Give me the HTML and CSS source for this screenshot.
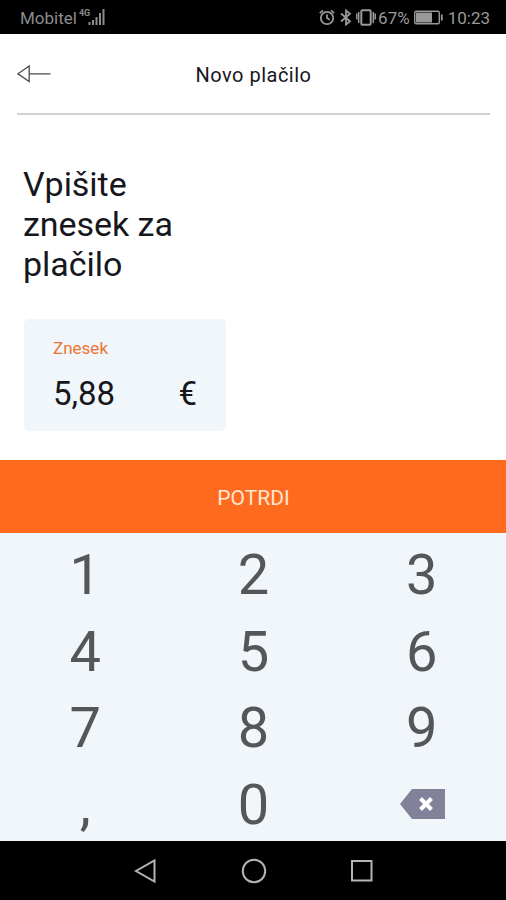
FILE: index.html
```html
<!DOCTYPE html>
<html lang="sl">
<head>
    <meta charset="UTF-8">
    <meta name="viewport" content="width=device-width, initial-scale=1.0">
    <title>Novo plačilo</title>
    <link rel="stylesheet" href="styles.css">
</head>
<body>
    <div class="status-bar">
        <div class="carrier">
            <span>Mobitel</span>
            <span class="network">4G</span>
            <svg class="signal" width="17" height="17" viewBox="0 0 17 17">
                <path d="M1.5 13v3M5 11V16M8.5 8v8M12 4v12M15.5 0v16" stroke="currentColor" stroke-width="2"/>
            </svg>
        </div>
        <div class="status-icons">
            <svg class="alarm" width="16" height="17" viewBox="0 0 16 17" fill="none" stroke="currentColor" stroke-width="1.8">
                <circle cx="8" cy="9" r="6.2"/>
                <path d="M8 5.5V9l2.8 1.8M.8 4.2L4 1.3M15.2 4.2L12 1.3"/>
            </svg>
            <svg class="bluetooth" width="12" height="17" viewBox="0 0 12 17" fill="none" stroke="currentColor" stroke-width="1.8">
                <path d="M1 4.5l9 7.8-4 3.2v-14l4 3.2-9 7.8"/>
            </svg>
            <svg class="vibrate" width="20" height="17" viewBox="0 0 20 17" fill="none" stroke="currentColor" stroke-width="2">
                <rect x="5.3" y="1.3" width="9.4" height="14.4" rx="1"/>
                <path d="M2.7 3v11M.8 4.5v6M17.3 3v11M19.2 4.5v6" stroke-width="1.5"/>
            </svg>
            <span class="percent">67%</span>
            <svg class="battery" width="29" height="15" viewBox="0 0 29 15">
                <rect x=".7" y="1.2" width="24.6" height="12.6" rx="1.5" fill="none" stroke="currentColor" stroke-width="1.4"/>
                <path d="M2 2.500h16v10H2z" fill="currentColor"/>
                <path d="M27.8 4.5v6" stroke="currentColor" stroke-width="1.8"/>
            </svg>
            <span class="time">10:23</span>
        </div>
    </div>

    <header class="header">
        <svg class="back" width="34" height="20" viewBox="0 0 34 20" fill="none" stroke="#4a4a52" stroke-width="1.3">
            <path d="M12.2 2v15.5L1 9.8zM12.2 9.8H33.5"/>
        </svg>
        <h1 class="title">Novo plačilo</h1>
    </header>

    <main class="content">
        <h2 class="prompt">Vpišite znesek za plačilo</h2>
        <div class="amount-box">
            <div class="amount-label">Znesek</div>
            <div class="amount-row">
                <span>5,88</span>
                <span>€</span>
            </div>
        </div>
    </main>

    <button class="confirm">POTRDI</button>

    <div class="keypad">
        <div class="key">1</div>
        <div class="key">2</div>
        <div class="key">3</div>
        <div class="key">4</div>
        <div class="key">5</div>
        <div class="key">6</div>
        <div class="key">7</div>
        <div class="key">8</div>
        <div class="key">9</div>
        <div class="key">,</div>
        <div class="key">0</div>
        <div class="key">
            <svg class="delete" width="45" height="30" viewBox="0 0 45 30">
                <path d="M0 15L12 0h33v30H12z" fill="#81819a"/>
                <path d="M20.5 9.5l11 11M31.5 9.5l-11 11" stroke="#fff" stroke-width="4"/>
            </svg>
        </div>
    </div>

    <nav class="nav-bar">
        <svg width="24" height="26" viewBox="0 0 24 26"><path d="M20.5 2.5v21L2 13z"/></svg>
        <svg width="26" height="26" viewBox="0 0 26 26"><circle cx="13" cy="13" r="11.2"/></svg>
        <svg width="24" height="24" viewBox="0 0 24 24"><path d="M2 2h19.5v19.5H2z"/></svg>
    </nav>
</body>
</html>
```

FILE: styles.css
```css
* {
    box-sizing: border-box;
}
body {
    font-family: Roboto, sans-serif;
    display: flex;
    flex-direction: column;
    height: 900px;
    margin: 0;
    background-color: #ffffff;
    color: #16161c;
    overflow: hidden;
}
svg {
    display: block;
    flex: none;
}
.status-bar {
    display: flex;
    justify-content: space-between;
    height: 34px;
    padding: 0 16px 0 20px;
    background-color: #000000;
    color: #999999;
    font-size: 17px;
    line-height: 36px;
}
.carrier, .status-icons {
    display: flex;
}
.carrier {
    color: #8c8c8c;
}
.network {
    margin: 8px 0 0 2px;
    font-size: 9px;
    font-weight: bold;
    line-height: 10px;
}
.signal {
    margin: 9px 0 0 -2px;
}
.status-icons svg {
    margin-top: 9px;
}
.status-icons .bluetooth {
    margin-left: 5px;
}
.status-icons .vibrate {
    margin-left: 4px;
}
.percent {
    margin-left: 2px;
}
.status-icons .battery {
    margin: 10px 0 0 4px;
}
.time {
    margin-left: 5px;
}
.header {
    display: grid;
    grid-template-columns: 34px 1fr 34px;
    align-items: center;
    height: 81px;
    margin: 0 16px 0 17px;
    border-bottom: 2px solid #d2d2d2;
}
.title {
    margin: 2px 0 0;
    font-size: 20px;
    font-weight: normal;
    letter-spacing: 0.5px;
    line-height: 24px;
    text-align: center;
}
.content {
    height: 345px;
    padding: 49px 24px 0 23px;
}
.prompt {
    width: 180px;
    margin: 0;
    font-size: 34px;
    font-weight: normal;
    letter-spacing: -0.05px;
    line-height: 40px;
}
.amount-box {
    width: 202px;
    height: 112px;
    margin: 35px 0 0 1px;
    padding: 19px 29px 0;
    background-color: #f1f6fa;
    border-radius: 5px;
}
.amount-label {
    color: #ed7534;
    font-size: 17px;
    line-height: 20px;
}
.amount-row {
    display: flex;
    justify-content: space-between;
    margin-top: 16px;
    font-size: 33px;
    line-height: 40px;
}
.confirm {
    height: 73px;
    padding: 2px 0 0 1px;
    border: none;
    background-color: #ff6b1e;
    color: #ffe6d2;
    font-family: inherit;
    font-size: 21px;
}
.keypad {
    display: grid;
    grid-template-columns: repeat(3, 1fr);
    grid-auto-rows: 76.5px;
    height: 308px;
    padding: 4px 0 0 1px;
    background-color: #f1f6fa;
    color: #55565a;
    font-size: 56px;
    line-height: 76px;
    text-align: center;
}
.key {
    display: flex;
    justify-content: center;
}
.delete {
    margin: 22px 0 0 1px;
}
.nav-bar {
    display: flex;
    justify-content: center;
    align-items: center;
    gap: 83px;
    flex: 1;
    padding-left: 1px;
    background-color: #000000;
}
.nav-bar svg {
    fill: none;
    stroke: #b4b4b4;
    stroke-width: 2;
}
```
